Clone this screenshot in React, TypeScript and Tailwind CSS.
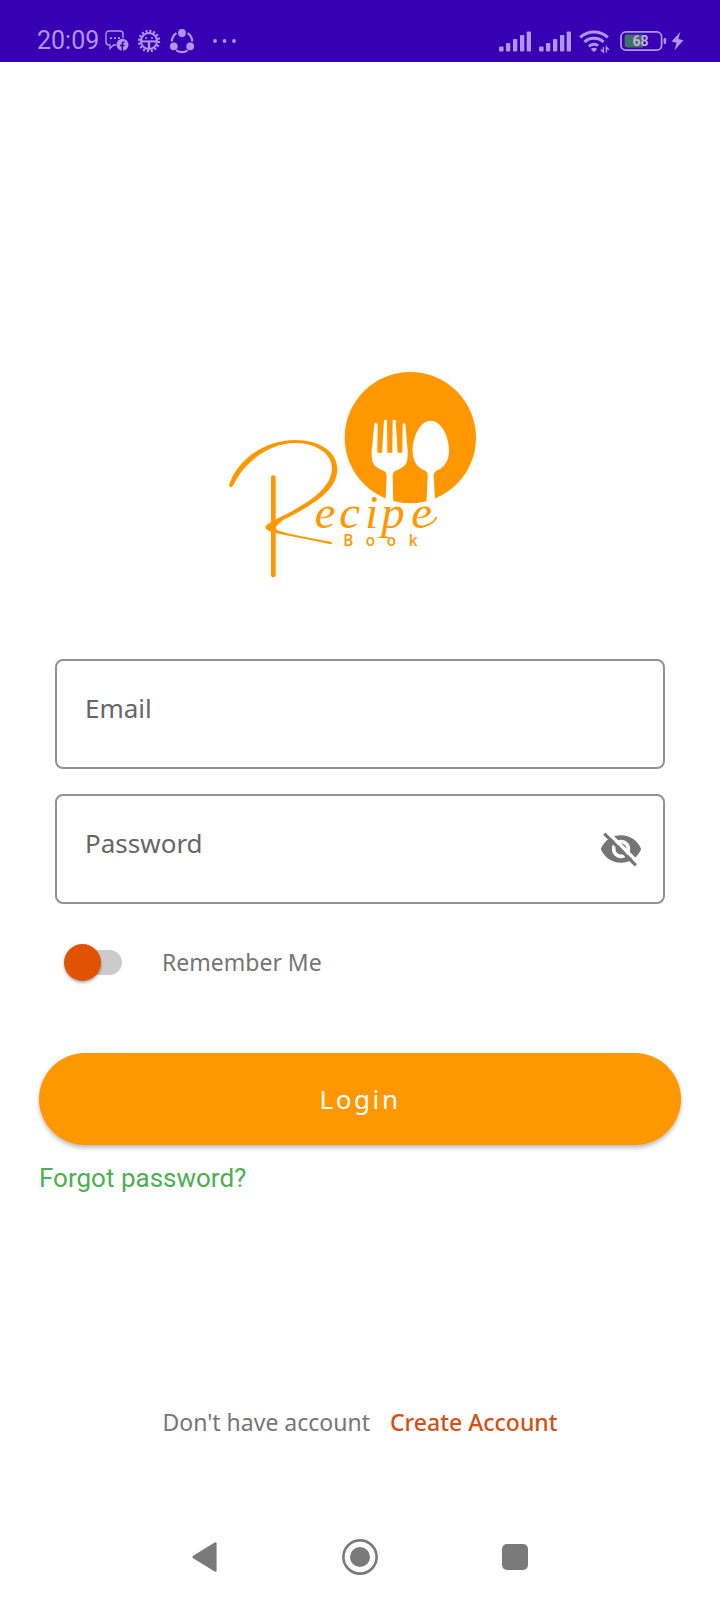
import { useState } from "react";

function ChatIcon() {
  return (
    <svg viewBox="0 0 24 22" className="h-[22px] w-6" fill="none" aria-hidden="true">
      <path d="M11 15H8.5L5 18.5V15H4a3 3 0 0 1-3-3V4a3 3 0 0 1 3-3h11a3 3 0 0 1 3 3v4" stroke="currentColor" strokeWidth="1.4" />
      <path d="M5 7.3h2v1.8H5zM9 7.3h2v1.8H9zM13 7.3h2v1.8h-2z" fill="currentColor" />
      <circle cx="17.5" cy="14.8" r="6" fill="currentColor" />
      <path d="M17.3 21v-7.2q0-2 2.3-1.9M15 15.6h4.6" stroke="#3700b3" strokeWidth="1.5" />
    </svg>
  );
}

function GearIcon() {
  return (
    <svg viewBox="0 0 24 24" className="size-6" fill="none" stroke="currentColor" aria-hidden="true">
      <circle cx="12" cy="12" r="9.9" strokeWidth="2.6" strokeDasharray="2.1 1.788" />
      <circle cx="12" cy="12" r="8" strokeWidth="2" />
      <path d="M4 12.4h16" strokeWidth="2" />
      <path d="M12 13v7" strokeWidth="2.4" />
      <path d="M8 9h2M14 9h2" strokeWidth="1.4" />
    </svg>
  );
}

function ShareIcon() {
  return (
    <svg viewBox="0 0 26 26" className="size-[26px]" fill="none" aria-hidden="true">
      <path d="M7.4 5.2A10.4 10.4 0 0 0 2.8 13.5M18.6 5.2a10.4 10.4 0 0 1 4.6 8.3M7.2 22.4a11 11 0 0 0 11.6 0" stroke="currentColor" strokeWidth="2.2" />
      <circle cx="13" cy="5" r="3.9" fill="currentColor" />
      <circle cx="4.8" cy="18.3" r="3.9" fill="currentColor" />
      <circle cx="21.2" cy="18.3" r="3.9" fill="currentColor" />
    </svg>
  );
}

function SignalIcon() {
  return (
    <svg viewBox="0 0 32 21" className="h-[21px] w-8" fill="currentColor" aria-hidden="true">
      <rect x="0" y="15.5" width="4.6" height="5" rx="1" />
      <rect x="7" y="12" width="4.3" height="8.5" rx="1" />
      <rect x="14" y="8" width="4.3" height="12.5" rx="1" />
      <rect x="21" y="4" width="4.3" height="16.5" rx="1" />
      <rect x="27.7" y="0.5" width="4.3" height="20" rx="1" />
    </svg>
  );
}

function WifiIcon() {
  return (
    <svg viewBox="0 0 31 24" className="h-6 w-[31px]" fill="none" stroke="currentColor" aria-hidden="true">
      <path d="M1.2 8.3a20.5 20.5 0 0 1 27.6 0M5.4 13a14 14 0 0 1 19.2 0M9.8 17.4a7.8 7.8 0 0 1 9.4-.8" strokeWidth="3" />
      <path d="M11.8 20a4.5 4.5 0 0 1 6.4 0L15 23.2z" fill="currentColor" stroke="none" />
      <path d="M24.4 18v5.2L21.8 20.6M27.4 23.4v-5.2l2.4 2.6" strokeWidth="1.4" />
    </svg>
  );
}

function BatteryIcon() {
  return (
    <svg viewBox="0 0 47 22" className="h-[22px] w-[47px]" aria-hidden="true">
      <rect x="1" y="1.8" width="40.6" height="18.4" rx="5" fill="none" stroke="currentColor" strokeWidth="1.8" />
      <path d="M7 4.6h16v12.8H7a2.4 2.4 0 0 1-2.4-2.4V7A2.4 2.4 0 0 1 7 4.6z" fill="#43705f" />
      <rect x="43.6" y="8" width="2.6" height="6" rx="1.2" fill="currentColor" />
      <text x="20.6" y="16" textAnchor="middle" fontSize="14" className="fill-[#c3b0ea] font-['Roboto',sans-serif] font-bold">
        68
      </text>
    </svg>
  );
}

function BoltIcon() {
  return (
    <svg viewBox="0 0 13 20" className="h-5 w-[13px]" fill="currentColor" aria-hidden="true">
      <path d="M9.4.8.6 10.6l5 1.2-2.2 7.6 9-10.2-5-1.2z" />
    </svg>
  );
}

function StatusBar() {
  return (
    <header className="flex h-[62px] items-center justify-between bg-[#3700b3] pt-5 pr-9 pl-[37px] text-[#b195ec]">
      <div className="flex items-center">
        <span className="font-['Roboto',sans-serif] text-[25px] leading-8">20:09</span>
        <span className="ml-1.5 flex items-center gap-2">
          <ChatIcon />
          <GearIcon />
          <ShareIcon />
        </span>
        <svg viewBox="0 0 24 4" className="ml-[18px] h-1 w-6" fill="currentColor" aria-hidden="true">
          <circle cx="2" cy="2" r="1.9" />
          <circle cx="11.5" cy="2" r="1.9" />
          <circle cx="21" cy="2" r="1.9" />
        </svg>
      </div>
      <div className="flex items-center gap-2">
        <SignalIcon />
        <SignalIcon />
        <WifiIcon />
        <span className="ml-0.5 flex items-center gap-1">
          <BatteryIcon />
          <BoltIcon />
        </span>
      </div>
    </header>
  );
}

function Logo() {
  return (
    <svg viewBox="30 0 840 690" className="h-[230px] w-[280px]" role="img" aria-label="Recipe Book">
      <circle cx="601" cy="233" r="197" fill="#ff9800" />
      <path
        fill="#fff"
        d="M496 188 L503 192 L502 278 L516 278 L522 181 Q526 177 531 181 L532 278 L547 278 L548 181 Q552 177 557 181 L563 278 L577 278 L578 192 Q582 187 586 192 L593 270 V290 Q592 310 580 320 Q568 328 556 333 Q548 337 548 350 L550 436 H526 L530 350 Q530 337 522 333 Q498 324 491 312 Q484 300 485 275 L493 192 Q495 187 500 189z"
      />
      <path
        fill="#fff"
        d="M662 182 C695 182 717 230 717 272 C717 304 702 322 682 331 Q671 336 671 348 L676 436 H649 L653 348 Q653 336 644 331 C622 322 608 304 608 272 C608 230 630 182 662 182z"
      />
      <g fill="#ff9800">
        <path d="M57 376 C78 305 160 240 255 240 C330 240 382 276 382 328 C382 400 285 446 218 481 L200 497 Q192 506 205 512 C240 522 300 535 363 545 Q370 549 363 553 L200 520 C182 516 167 511 166 502 C167 493 190 482 212 471 C280 436 364 392 366 325 C366 284 322 249 255 249 C175 249 98 312 70 376 Q62 388 57 376z" />
        <rect x="183" y="346" width="14" height="306" rx="6" />
      </g>
      <path d="M650 496 Q670 490 679 473" fill="none" stroke="#ff9800" strokeWidth="5" strokeLinecap="round" />
      <text x="314 388 466 514 604" y="503" fontSize="140" fill="#ff9800" className="font-['Liberation_Serif',serif] italic">
        ecipe
      </text>
      <text x="400 467 530 596" y="558" fontSize="46" fill="#ff9800" className="font-['Open_Sans',sans-serif] font-semibold">
        Book
      </text>
    </svg>
  );
}

function EyeOffIcon() {
  return (
    <svg viewBox="0 0 24 24" className="size-11" aria-hidden="true">
      <path
        fill="currentColor"
        d="M12 4.5C7 4.5 2.73 7.61 1 12c1.73 4.39 6 7.5 11 7.5s9.27-3.11 11-7.5c-1.73-4.39-6-7.5-11-7.5zM12 17c-2.76 0-5-2.24-5-5s2.24-5 5-5 5 2.24 5 5-2.24 5-5 5zm0-8c-1.66 0-3 1.34-3 3s1.34 3 3 3 3-1.34 3-3-1.34-3-3-3z"
      />
      <path d="M4.2 2.3 21.6 19.7" stroke="#fff" strokeWidth="1.9" />
      <path d="M2.9 3.6 20.1 20.9" stroke="currentColor" strokeWidth="1.7" />
    </svg>
  );
}

const fieldClass =
  "block h-[110px] w-full rounded-lg border-2 border-[#929292] bg-white pb-3 pl-7 text-[26px] text-[#333] outline-none placeholder:text-[#666] placeholder:opacity-100 focus:border-[#ff9800]";

export default function App() {
  const [visible, setVisible] = useState(false);

  return (
    <div className="flex min-h-screen flex-col bg-white font-['Noto_Sans',sans-serif]">
      <StatusBar />

      <main className="flex grow flex-col px-[39px]">
        <div className="mt-[298px] flex justify-center">
          <Logo />
        </div>

        <form className="mt-[69px]" onSubmit={(e) => e.preventDefault()}>
          <div className="flex flex-col gap-[25px] px-4">
            <input type="email" aria-label="Email" placeholder="Email" className={fieldClass} />
            <div className="relative">
              <input
                type={visible ? "text" : "password"}
                aria-label="Password"
                placeholder="Password"
                className={fieldClass}
              />
              <button
                type="button"
                aria-label="Toggle password visibility"
                onClick={() => setVisible(!visible)}
                className="absolute inset-y-0 right-[22px] flex items-center text-[#757575]"
              >
                <EyeOffIcon />
              </button>
            </div>
          </div>

          <div className="mt-[38px] flex h-10 items-center pl-[25px]">
            <input
              id="remember"
              type="checkbox"
              role="switch"
              className="relative ml-2 h-[25px] w-[50px] appearance-none rounded-full bg-[#cbcbcb] before:absolute before:-top-1.5 before:-left-2 before:size-[37px] before:rounded-full before:bg-[#e15300] before:shadow-[0_2px_3px_rgba(0,0,0,0.3)] checked:before:left-5"
            />
            <label htmlFor="remember" className="ml-10 text-[23px] leading-8 text-[#757575]">
              Remember Me
            </label>
          </div>

          <button
            type="submit"
            className="mt-[71px] block h-[92px] w-full rounded-full bg-[#ff9800] text-[26px] tracking-widest text-white shadow-[0_3px_4px_rgba(0,0,0,0.25)]"
          >
            Login
          </button>
        </form>

        <a href="#forgot" className="mt-[13px] self-start font-['Roboto',sans-serif] text-[26px] leading-10 text-[#4caf50]">
          Forgot password?
        </a>

        <p className="mt-auto mb-[75px] flex justify-center gap-5 text-[23px] leading-8 text-[#757575]">
          <span>Don't have account</span>
          <a href="#create" className="font-medium text-[#d35012]">
            Create Account
          </a>
        </p>
      </main>

      <nav className="flex h-[87px] items-center justify-center gap-[115px] text-[#7a7a7a]">
        <button type="button" aria-label="Back" className="flex size-10 items-center justify-center">
          <svg viewBox="0 0 26 32" className="h-8 w-[26px]" fill="currentColor">
            <path d="M1.2 14.8 22.6 1.6q2-1 2 1v26.8q0 2-2 1L1.2 17.2q-1.8-1.2 0-2.4z" />
          </svg>
        </button>
        <button type="button" aria-label="Home" className="flex size-10 items-center justify-center">
          <svg viewBox="0 0 36 36" className="size-9">
            <circle cx="18" cy="18" r="16.6" fill="none" stroke="currentColor" strokeWidth="2.6" />
            <circle cx="18" cy="18" r="10" fill="currentColor" />
          </svg>
        </button>
        <button type="button" aria-label="Recent apps" className="flex size-10 items-center justify-center">
          <span className="size-[26px] rounded-[5px] bg-current" />
        </button>
      </nav>
    </div>
  );
}
